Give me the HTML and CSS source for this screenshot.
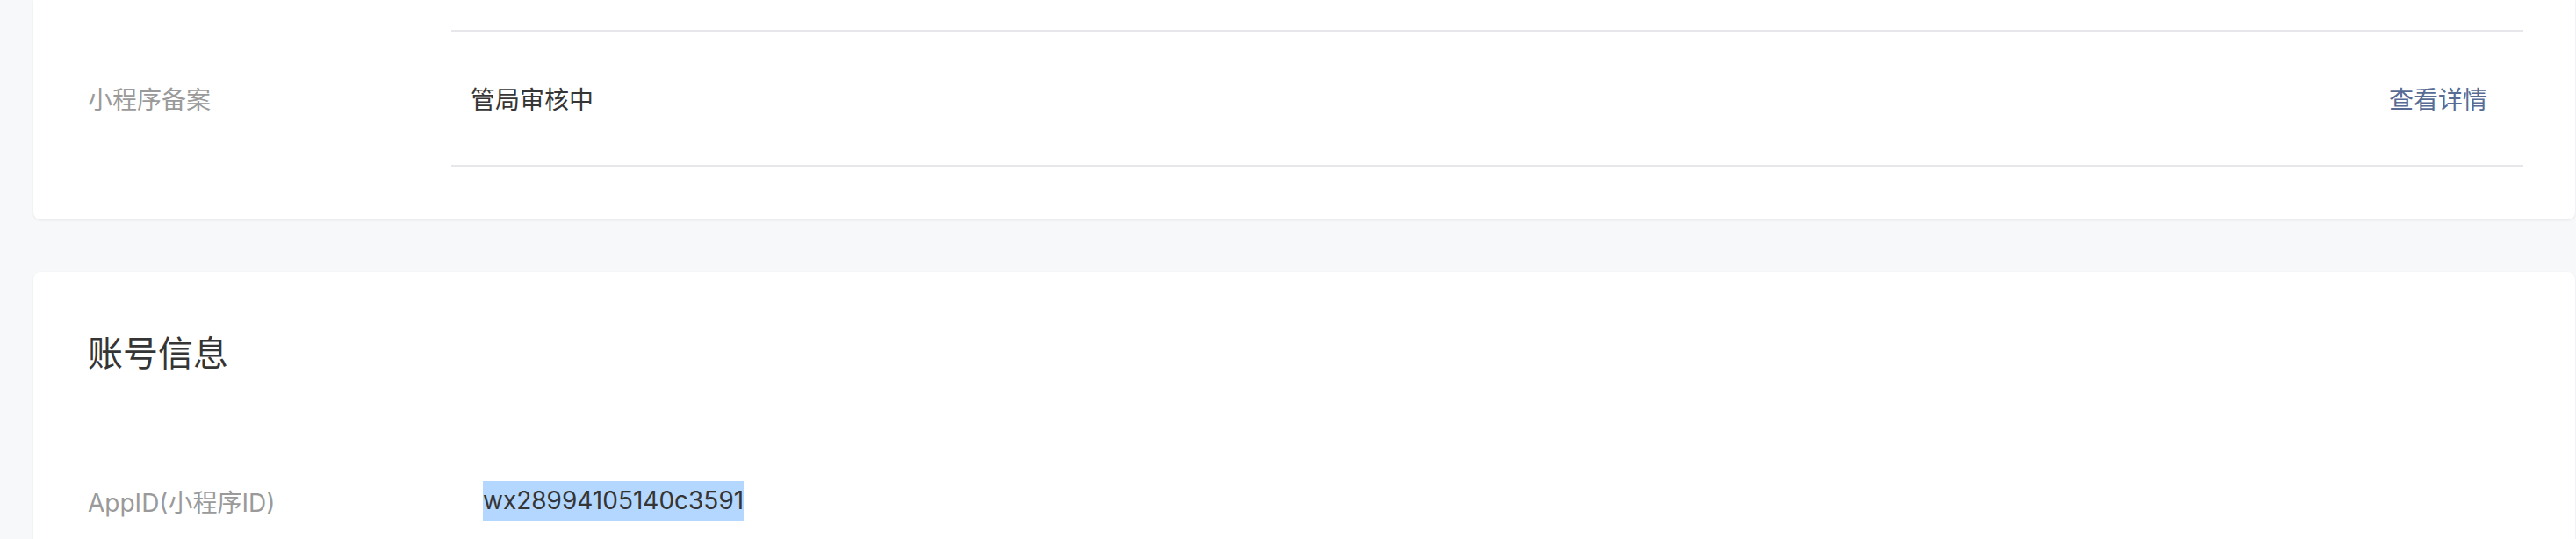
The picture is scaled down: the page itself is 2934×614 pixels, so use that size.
FILE: index.html
```html
<!DOCTYPE html>
<html lang="zh-CN">
<head>
<meta charset="utf-8">
<title>小程序设置</title>
<link rel="stylesheet" href="styles.css">
</head>
<body>
<main class="page">
  <section class="card card-top">
    <div class="info-row">
      <div class="info-label">小程序备案</div>
      <div class="info-value ruled">
        <span class="value-text">管局审核中</span>
        <a class="value-link" href="#">查看详情</a>
      </div>
    </div>
  </section>

  <section class="card card-account">
    <h2 class="card-title">账号信息</h2>
    <div class="account-row">
      <div class="account-label">AppID(小程序ID)</div>
      <div class="account-value"><span class="selected">wx28994105140c3591</span></div>
    </div>
  </section>
</main>
</body>
</html>
```

FILE: styles.css
```css
html, body {
  margin: 0;
  padding: 0;
  height: 614px;
  overflow: hidden;
  background: #f7f8fa;
  font-family: "Inter", "Noto Sans CJK SC", "Noto Sans", sans-serif;
  color: #353535;
}

.page {
  display: flex;
  flex-direction: column;
  gap: 60px;
  padding: 0 1px 0 38px;
}

.card {
  background: #ffffff;
  border-radius: 8px;
  box-shadow: 0 1px 3px rgba(0, 0, 0, 0.07);
}

.card-top {
  border-radius: 0 0 8px 8px;
  padding: 34px 59px 60px 62px;
}

.info-row {
  display: flex;
}

.info-label {
  width: 414px;
  flex: none;
  display: flex;
  align-items: center;
  font-size: 28px;
  color: #9a9a9a;
}

.info-value {
  flex: 1;
  display: flex;
  align-items: center;
  justify-content: space-between;
  height: 152px;
  padding: 0 41px 0 22px;
  font-size: 28px;
}

.ruled {
  border-top: 2px solid #e7e7eb;
  border-bottom: 2px solid #e7e7eb;
}

.value-text {
  color: #353535;
}

.value-link {
  color: #576b95;
  text-decoration: none;
}

.card-account {
  padding: 65px 59px 80px 62px;
}

.card-title {
  margin: 0;
  font-size: 40px;
  line-height: 56px;
  font-weight: 400;
  color: #353535;
}

.account-row {
  display: flex;
  align-items: center;
  margin-top: 117px;
}

.account-label {
  width: 450px;
  flex: none;
  font-size: 28px;
  color: #9a9a9a;
}

.account-value {
  font-size: 28px;
  color: #353535;
}

.selected {
  display: inline-block;
  line-height: 45px;
  background: #b3d7fe;
}
```
